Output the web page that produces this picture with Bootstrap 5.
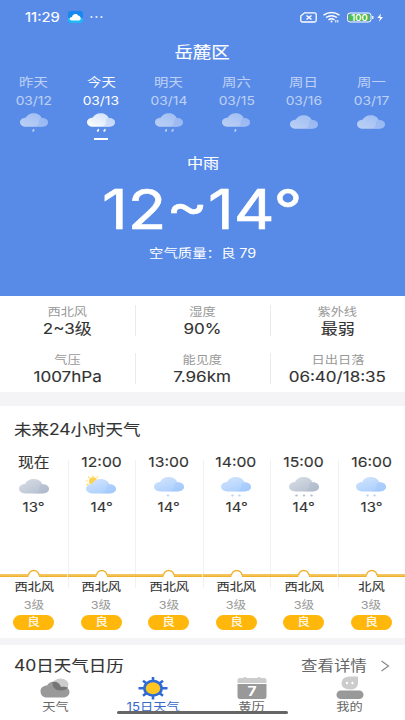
<!DOCTYPE html>
<html lang="zh-CN">
<head>
<meta charset="utf-8">
<meta name="viewport" content="width=device-width, initial-scale=1">
<title>天气</title>
<link href="https://cdn.jsdelivr.net/npm/bootstrap@5.3.0/dist/css/bootstrap.min.css" rel="stylesheet">
<style>
body{font-family:Inter,"Noto Sans CJK SC",sans-serif;width:405px;height:720px;overflow:hidden;color:#333;background:#fff}
.phone{width:405px;height:720px}
svg{display:block;overflow:visible}
.wide{display:inline-block;transform:scaleX(1.15);white-space:nowrap}
.from-left{transform-origin:left}
.line{display:block;white-space:nowrap;text-align:center}
.firm{-webkit-text-stroke:.12px currentColor}
.hero{height:296px;background:#588be7;color:#fff}
.status{height:34px;padding:0 21px 0 25px}
.clock{font-size:13px;line-height:34px;width:43px}
.sim{margin-right:6px}
.city{font-size:16px;line-height:22px;margin-top:7px}
.days{margin-top:11px}
.day{opacity:.6;font-size:12.5px}
.day.now{opacity:1}
.day .line{line-height:18px}
.day .date{font-size:12px}
.day svg{margin-top:3px}
.mark-bar{width:14px;height:2px;background:#fff;margin:5px auto 0}
.cond{font-size:14px;line-height:20px;margin-top:13px}
.temp{font-size:55px;line-height:60px;height:60px;margin-top:6px}
.temp .wide{-webkit-text-stroke:.6px #fff}
.air{font-size:12.5px;line-height:18px;margin-top:6px}
.stats{height:96px;padding-top:8px}
.stat{height:48px;position:relative}
.stat .k{font-size:11.5px;line-height:16px;color:#999}
.stat .v{font-size:14.8px;line-height:18px}
.stat+.stat::before{content:"";position:absolute;left:0;top:1px;height:31px;width:1px;background:#eaeaea}
.gap-strip{background:#f4f4f7;height:14px}
.gap-strip.slim{height:7px}
.sec-title{font-size:15.2px;line-height:20px}
.hours{height:232px;padding-top:14px}
.hours .sec-title{padding-left:14px}
.hour-row{margin-top:12px}
.hour{padding-top:0}
.hour+.hour{background:linear-gradient(#f1f1f1,#f1f1f1) left 8px/1px 128px no-repeat}
.hour .t{font-size:13.7px;line-height:20px}
.hour .cond-icon{margin-top:5px}
.hour .c{font-size:13px;line-height:18px}
.trend{margin-top:53px;height:12px}
.hour .w{font-size:11.5px;line-height:16px;margin-top:-2px}
.hour .l{font-size:11px;line-height:16px;color:#999;margin-top:2px}
.aqi{width:41px;height:15px;border-radius:8px;background:#ffb70b;color:#fff;font-size:11px;line-height:15px;margin:2px auto 0}
.calendar{height:32px;padding:11px 16px 0 14px}
.more{font-size:14.3px;color:#666;height:20px;line-height:20px;width:88px}
.tab{color:#666;font-size:11.5px}
.tab .line{line-height:14px;margin-top:1px}
.tab.on{color:#3568c8}
.tab svg{margin:0 auto}
.tabs{padding:0 6px}
.home-bar{left:117px;top:711px;width:171px;height:3px;border-radius:2px;background:#666}
</style>
<script src="https://cdn.jsdelivr.net/npm/bootstrap@5.3.0/dist/js/bootstrap.bundle.min.js"></script>
</head>
<body>
<svg width="0" height="0" class="position-absolute">
<defs>
<linearGradient id="gw" x1="0" y1="1" x2="1" y2="0"><stop offset="0" stop-color="#fff"/><stop offset="1" stop-color="#c9dcfb"/></linearGradient>
<linearGradient id="gb" x1="0" y1="0" x2=".6" y2="1"><stop offset="0" stop-color="#d5e5fd"/><stop offset="1" stop-color="#acd0fd"/></linearGradient>
<linearGradient id="gg" x1="0" y1="0" x2="1" y2="1"><stop offset="0" stop-color="#dadfe7"/><stop offset="1" stop-color="#b1bccd"/></linearGradient>
<path id="cloud" d="M6.500 14.500C2.600 14.500 0 12.300 0 9.600C0 7 2.500 5 6 4.900C7.500 1.900 10.800 0 14.500 0C19 0 22.300 2.200 23.200 5.200C27.300 5.200 30 7.200 30 9.800C30 12.500 27.500 14.500 23.800 14.500Z"/>
<path id="puff" d="M14 14.500C19 14.500 20.500 11 20.300 8.500C20.200 6.500 21.500 5.300 23.200 5.200C27.300 5.200 30 7.200 30 9.800C30 12.500 27.500 14.500 23.800 14.500Z"/>
<path id="drop" d="M1 0Q-2.500 3.200 0 3.500Q2.300 3.300 1 0"/>
<ellipse id="dot" rx="1.300" ry="1.100"/>
<symbol id="top-cloud" viewBox="0 0 30 21"><use href="#cloud" fill="url(#gw)"/><use href="#puff" fill="#a8c4f6" opacity=".4"/></symbol>
<symbol id="top-rain1" viewBox="0 0 30 21"><use href="#cloud" fill="url(#gw)"/><use href="#puff" fill="#a8c4f6" opacity=".4"/><use href="#drop" x="14" y="16.500" fill="#fff"/></symbol>
<symbol id="top-rain2" viewBox="0 0 30 21"><use href="#cloud" fill="url(#gw)"/><use href="#puff" fill="#a8c4f6" opacity=".4"/><use href="#drop" x="11.500" y="16.500" fill="#fff"/><use href="#drop" x="18.500" y="16.500" fill="#fff"/></symbol>
<symbol id="h-cloud" viewBox="0 0 30 21"><g transform="translate(0 2)"><use href="#cloud" fill="url(#gg)"/><use href="#puff" fill="#a9b5c8" opacity=".35"/></g></symbol>
<symbol id="h-sun" viewBox="0 0 30 21" overflow="visible"><g stroke="#ffd75e" stroke-width="1.200"><path d="M7-1.500V0M2-.3l1.500 1.500M-.3 4H1.500M12-.5L10.800 1M.5 8L2.500 6.900"/></g><circle cx="7" cy="4.300" r="4" fill="#ffd24d"/><g transform="translate(0 2)"><use href="#cloud" fill="url(#gb)"/><use href="#puff" fill="#9cc4fb" opacity=".4"/></g></symbol>
<symbol id="h-rain1" viewBox="0 0 30 21"><use href="#cloud" fill="url(#gb)"/><use href="#puff" fill="#9cc4fb" opacity=".4"/><use href="#dot" x="14" y="18.500" fill="#b5d3fb"/></symbol>
<symbol id="h-rain2" viewBox="0 0 30 21"><use href="#cloud" fill="url(#gb)"/><use href="#puff" fill="#9cc4fb" opacity=".4"/><use href="#dot" x="11.500" y="18.500" fill="#b5d3fb"/><use href="#dot" x="18.500" y="18.500" fill="#b5d3fb"/></symbol>
<symbol id="h-rain3" viewBox="0 0 30 21"><use href="#cloud" fill="url(#gg)"/><use href="#puff" fill="#a9b5c8" opacity=".35"/><use href="#dot" x="7.500" y="18.500" fill="#b3bdcc"/><use href="#dot" x="15" y="18.500" fill="#b3bdcc"/><use href="#dot" x="22.500" y="18.500" fill="#b3bdcc"/></symbol>
<symbol id="trend" viewBox="0 0 68 12" preserveAspectRatio="none"><path d="M0 5.300H68V8H0Z" fill="#efb22e"/><path d="M0 6.500H68" stroke="#f6c965" stroke-width=".7"/><path d="M28.700 8.800V6.500A5.300 5 0 0 1 39.300 6.500V8.800Z" fill="#fff"/><path d="M28.700 6.500A5.300 5 0 0 1 39.300 6.500" fill="none" stroke="#efb22e" stroke-width="1.300"/></symbol>
</defs>
</svg>
<div class="phone d-flex flex-column position-relative">
<header class="hero flex-shrink-0">
<div class="status d-flex align-items-center">
<span class="clock"><span class="wide from-left firm">11:29</span></span>
<svg width="15" height="12" viewBox="0 0 15 12"><rect width="15" height="12" rx="3" fill="#1688ee"/><path d="M0 7h15v2a3 3 0 0 1-3 3H3a3 3 0 0 1-3-3z" fill="#21b8f6"/><path d="M4 9.500C.8 9.500 1.200 6 4 6C4.500 3 8.500 2 10 4.500C13.500 5 13.500 9.500 11 9.500Z" fill="#fff"/></svg>
<svg class="ms-2" width="12" height="4" viewBox="0 0 12 4" fill="#e8effc"><circle cx=".5" cy="2" r="1.100"/><circle cx="5.500" cy="2" r="1.100"/><circle cx="10.500" cy="2" r="1.100"/></svg>
<svg class="ms-auto sim" width="17" height="11" viewBox="0 0 17 11" fill="none" stroke="#fff" stroke-width="1.300"><path d="M4.500.8H14.500Q16.200.8 16.200 2.300V8.500Q16.200 10 14.500 10H2.500Q.8 10 .8 8.500V4Z"/><path d="M6.500 3.500l5 4M11.500 3.500l-5 4" stroke-width="1.500"/></svg>
<svg width="17" height="11" viewBox="0 0 17 11" fill="none" stroke="#fff" stroke-width="1.500"><path d="M.5 3.200Q8.500-2 16.500 3.200M3 5.500Q8.500 1.800 14 5.500M5.500 7.800Q8.500 5.700 11.500 7.800"/><circle cx="8.500" cy="9.500" r="1" fill="#fff" stroke="none"/><path d="M12.800 10.500V8M14.800 8v2.500" stroke-width="1"/></svg>
<svg class="ms-2" width="36" height="11" viewBox="0 0 36 11"><rect x="-.5" y="1" width="23.500" height="9" rx="2.500" fill="none" stroke="#fff"/><rect x="1" y="2.300" width="20.500" height="6.400" rx="1.200" fill="#50bd3e"/><text x="3.200" y="8.600" font-size="8.500" font-weight="600" textLength="16.500" lengthAdjust="spacingAndGlyphs" fill="#fff">100</text><path d="M24.800 4v3" stroke="#fff" stroke-width="1.300"/><path d="M33 1.500L29.300 6H32L31 9.800L35 5H32.300Z" fill="#fff"/></svg>
</div>
<div class="line city"><span class="wide firm">岳麓区</span></div>
<div class="days row g-0">
<div class="col day"><span class="line"><span class="wide">昨天</span></span><span class="line date"><span class="wide">03/12</span></span><svg class="mx-auto" width="28" height="20"><use href="#top-rain1"/></svg></div>
<div class="col day now"><span class="line"><span class="wide">今天</span></span><span class="line date"><span class="wide">03/13</span></span><svg class="mx-auto" width="28" height="20"><use href="#top-rain2"/></svg><div class="mark-bar"></div></div>
<div class="col day"><span class="line"><span class="wide">明天</span></span><span class="line date"><span class="wide">03/14</span></span><svg class="mx-auto" width="28" height="20"><use href="#top-rain2"/></svg></div>
<div class="col day"><span class="line"><span class="wide">周六</span></span><span class="line date"><span class="wide">03/15</span></span><svg class="mx-auto" width="28" height="20"><use href="#top-rain1"/></svg></div>
<div class="col day"><span class="line"><span class="wide">周日</span></span><span class="line date"><span class="wide">03/16</span></span><svg class="mx-auto" width="28" height="20"><use href="#top-cloud" y="2"/></svg></div>
<div class="col day"><span class="line"><span class="wide">周一</span></span><span class="line date"><span class="wide">03/17</span></span><svg class="mx-auto" width="28" height="20"><use href="#top-cloud" y="2"/></svg></div>
</div>
<div class="line cond"><span class="wide firm">中雨</span></div>
<div class="line temp"><span class="wide">12~14°</span></div>
<div class="line air"><span class="wide">空气质量：良 79</span></div>
</header>
<section class="stats flex-shrink-0">
<div class="row g-0">
<div class="col stat"><span class="line k"><span class="wide">西北风</span></span><span class="line v"><span class="wide firm">2~3级</span></span></div>
<div class="col stat"><span class="line k"><span class="wide">湿度</span></span><span class="line v"><span class="wide firm">90%</span></span></div>
<div class="col stat"><span class="line k"><span class="wide">紫外线</span></span><span class="line v"><span class="wide firm">最弱</span></span></div>
</div>
<div class="row g-0">
<div class="col stat"><span class="line k"><span class="wide">气压</span></span><span class="line v"><span class="wide firm">1007hPa</span></span></div>
<div class="col stat"><span class="line k"><span class="wide">能见度</span></span><span class="line v"><span class="wide firm">7.96km</span></span></div>
<div class="col stat"><span class="line k"><span class="wide">日出日落</span></span><span class="line v"><span class="wide firm">06:40/18:35</span></span></div>
</div>
</section>
<div class="gap-strip flex-shrink-0"></div>
<section class="hours flex-shrink-0">
<div class="sec-title"><span class="wide from-left firm">未来24小时天气</span></div>
<div class="hour-row row g-0">
<div class="col hour"><span class="line t"><span class="wide firm">现在</span></span><svg class="mx-auto cond-icon" width="30" height="21"><use href="#h-cloud"/></svg><span class="line c"><span class="wide firm">13°</span></span><svg class="trend w-100"><use href="#trend"/></svg><span class="line w"><span class="wide firm">西北风</span></span><span class="line l"><span class="wide">3级</span></span><div class="aqi line"><span class="wide firm">良</span></div></div>
<div class="col hour"><span class="line t"><span class="wide firm">12:00</span></span><svg class="mx-auto cond-icon" width="30" height="21"><use href="#h-sun"/></svg><span class="line c"><span class="wide firm">14°</span></span><svg class="trend w-100"><use href="#trend"/></svg><span class="line w"><span class="wide firm">西北风</span></span><span class="line l"><span class="wide">3级</span></span><div class="aqi line"><span class="wide firm">良</span></div></div>
<div class="col hour"><span class="line t"><span class="wide firm">13:00</span></span><svg class="mx-auto cond-icon" width="30" height="21"><use href="#h-rain1"/></svg><span class="line c"><span class="wide firm">14°</span></span><svg class="trend w-100"><use href="#trend"/></svg><span class="line w"><span class="wide firm">西北风</span></span><span class="line l"><span class="wide">3级</span></span><div class="aqi line"><span class="wide firm">良</span></div></div>
<div class="col hour"><span class="line t"><span class="wide firm">14:00</span></span><svg class="mx-auto cond-icon" width="30" height="21"><use href="#h-rain2"/></svg><span class="line c"><span class="wide firm">14°</span></span><svg class="trend w-100"><use href="#trend"/></svg><span class="line w"><span class="wide firm">西北风</span></span><span class="line l"><span class="wide">3级</span></span><div class="aqi line"><span class="wide firm">良</span></div></div>
<div class="col hour"><span class="line t"><span class="wide firm">15:00</span></span><svg class="mx-auto cond-icon" width="30" height="21"><use href="#h-rain3"/></svg><span class="line c"><span class="wide firm">14°</span></span><svg class="trend w-100"><use href="#trend"/></svg><span class="line w"><span class="wide firm">西北风</span></span><span class="line l"><span class="wide">3级</span></span><div class="aqi line"><span class="wide firm">良</span></div></div>
<div class="col hour"><span class="line t"><span class="wide firm">16:00</span></span><svg class="mx-auto cond-icon" width="30" height="21"><use href="#h-rain2"/></svg><span class="line c"><span class="wide firm">13°</span></span><svg class="trend w-100"><use href="#trend"/></svg><span class="line w"><span class="wide firm">北风</span></span><span class="line l"><span class="wide">3级</span></span><div class="aqi line"><span class="wide firm">良</span></div></div>
</div>
</section>
<div class="gap-strip slim flex-shrink-0"></div>
<section class="calendar flex-shrink-0 d-flex justify-content-between">
<div class="sec-title"><span class="wide from-left firm">40日天气日历</span></div>
<div class="more d-flex align-items-center justify-content-between"><span class="wide from-left">查看详情</span><svg width="8" height="12" viewBox="0 0 8 12" fill="none" stroke="#888" stroke-width="1.200"><path d="M.5 1L7.500 6L.5 11"/></svg></div>
</section>
<nav class="tabs row g-0 flex-shrink-0">
<div class="col tab"><svg width="30" height="22" viewBox="0 0 30 22"><ellipse cx="20.500" cy="7.500" rx="8" ry="6" fill="#ccc"/><path d="M7 20.500C3 20.500 .5 18 .5 14.200C.5 10.700 3.500 8.500 7 8.500C8.500 5.500 12 4.200 15 5C18 5.500 20 7.500 21 10C26 9 29.500 11.500 29.500 15C29.500 18 27 20.500 23 20.500Z" fill="#999"/><path d="M12.500 5Q12 13.400 20.500 13.500Q26.300 13.300 28 10.500Q24.500 9.200 21 10Q18.500 4 12.500 5Z" fill="#757575"/></svg><span class="line"><span class="wide">天气</span></span></div>
<div class="col tab on"><svg width="30" height="22" viewBox="0 0 30 22"><path d="M15 0V22.500M.5 11.200H29.500M5 3.700L25 18.700M25 3.700L5 18.700" stroke="#2f6bd6" stroke-width="2.600"/><ellipse cx="15" cy="11.200" rx="10" ry="8.500" fill="#2f6bd6"/><ellipse cx="15" cy="11.200" rx="7.200" ry="6" fill="#ffc521"/></svg><span class="line"><span class="wide">15日天气</span></span></div>
<div class="col tab"><svg width="30" height="22" viewBox="0 0 30 22"><path d="M.5 6V3Q.5 1 3 1H6Q8-1 10 1H20Q22-1 24 1H27Q29.500 1 29.500 3V6Z" fill="#ccc"/><path d="M.5 7H29.500V20Q29.500 22 27 22H3Q.5 22 .5 20Z" fill="#999"/><text x="10.500" y="19" font-size="13" font-weight="700" textLength="9" lengthAdjust="spacingAndGlyphs" fill="#fff">7</text></svg><span class="line"><span class="wide">黄历</span></span></div>
<div class="col tab"><svg width="30" height="22" viewBox="0 0 30 22"><path d="M15-.5H23V6.500Q22.500 12.500 15 12.500Q6.500 12 6.500 6.200Q6.500-.2 15-.5Z" fill="#ccc"/><circle cx="12" cy="6" r="1.200" fill="#fff"/><circle cx="17.500" cy="6" r="1.200" fill="#fff"/><rect x="1.500" y="13.500" width="27" height="8.500" rx="4.250" fill="#999"/></svg><span class="line"><span class="wide">我的</span></span></div>
</nav>
<div class="home-bar position-absolute"></div>
</div>
</body>
</html>
